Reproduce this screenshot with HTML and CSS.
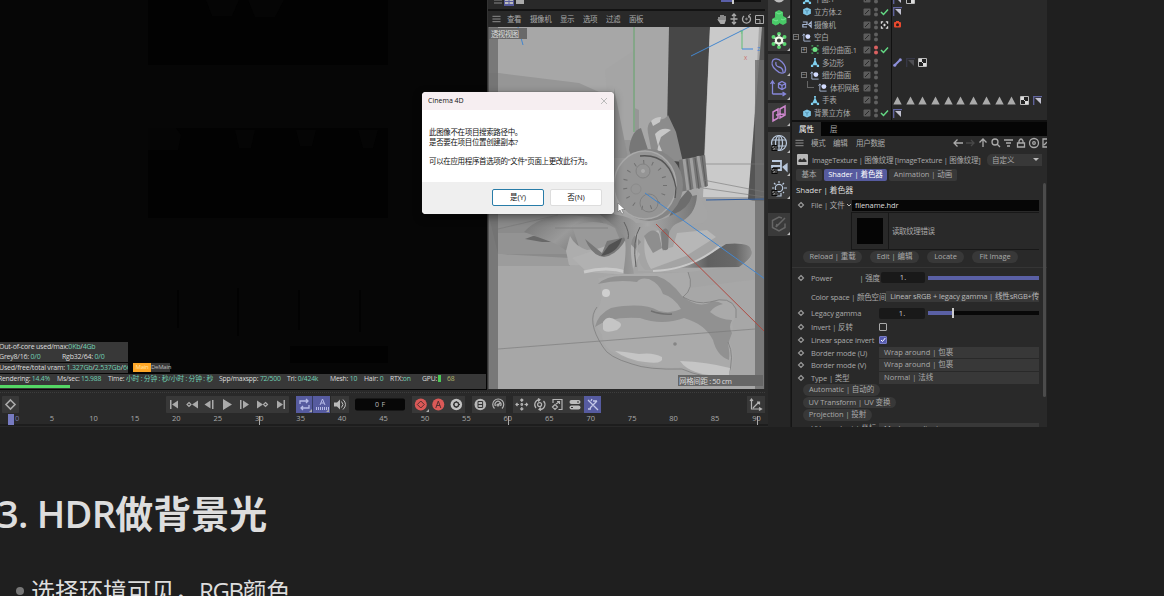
FILE: index.html
```
<!DOCTYPE html>
<html lang="zh-CN">
<head>
<meta charset="utf-8">
<title>HDR做背景光</title>
<link rel="stylesheet" href="styles.css">
</head>
<body>
<svg class="defs" width="0" height="0">
<defs>
<symbol id="layer" viewBox="0 0 8 8"><rect x=".5" y=".5" width="7" height="7" rx="1" fill="#5c5c5c"/><path d="M2 6L6 2" stroke="#292929"/></symbol>
<symbol id="dots" viewBox="0 0 6 12"><circle cx="3" cy="3.4" r="2"/><circle cx="3" cy="8.6" r="2"/></symbol>
<symbol id="check" viewBox="0 0 9 8"><path d="M1 4l2.5 2.5L8 1.5" fill="none" stroke="#63d884" stroke-width="1.5"/></symbol>
<symbol id="cube" viewBox="0 0 10 10"><path d="M5 .5l4.300 2v5L5 9.500.7 7.500v-5z" fill="#7fc6e6"/><path d="M3 3.500l2 1 2-1M5 4.500v3" stroke="#467f9d" fill="none" stroke-width=".8"/></symbol>
<symbol id="poly" viewBox="0 0 10 10"><path d="M5 1L8 8H2z" fill="#7fcfee"/><path d="M.5 7.500h2.500V10H.5zM7 7.500h2.500V10H7zM4 0h2v2H4z" fill="#7fcfee"/></symbol>
<symbol id="nul" viewBox="0 0 10 10"><path d="M1.500 1v8H9M0 3l1.500-2L3 3" stroke="#a9b9d7" fill="none"/><circle cx="6" cy="4" r="2.700" fill="#d3dcff"/></symbol>
<symbol id="cam" viewBox="0 0 12 10"><path d="M1 2h5v3H1v3h5M8 5l3-3v6z" fill="none" stroke="#a9b9d7" stroke-width="1.400"/></symbol>
<symbol id="subd" viewBox="0 0 10 10"><circle cx="5" cy="5" r="2.800" fill="#6ee183"/><path d="M1 1h2M7 1h2M1 9h2M7 9h2M1 5h1M8 5h1" stroke="#4aa560" stroke-width="1.400"/></symbol>
<symbol id="phong" viewBox="0 0 9 9"><path d="M.7 9V.7H9" fill="none" stroke="#6266a0" stroke-width="1.300"/><path d="M2 2h6v6z" fill="#c1c1d0"/></symbol>
<symbol id="checker" viewBox="0 0 9 9"><path d="M.5.5h8v8h-8z" fill="#222" stroke="#bbb"/><path d="M1 1h3v3H1zM5 5h3v3H5zM4 4h1v1H4z" fill="#ddd"/></symbol>
<symbol id="tri" viewBox="0 0 9 9"><path d="M4.500.5L8.700 8.500H.3z" fill="#aaa"/></symbol>
<symbol id="key" viewBox="0 0 8 8"><path d="M4 1.500L6.500 4 4 6.500 1.500 4z" fill="none" stroke="#999" stroke-width="1.200"/></symbol>
<symbol id="burger" viewBox="0 0 10 8"><path d="M.5 1h9M.5 4h9M.5 7h9" stroke="#999"/></symbol>
<symbol id="s1" viewBox="0 0 6 6"><path d="M0 0h6v6H0z" fill="#080808"/><path d="M3 1.500H1.300V3H3v1.500H1.200M4.500 1v4" fill="none" stroke="#aaa" stroke-width=".7"/></symbol>
</defs>
</svg>
<main class="article">
<section class="app">
  <div class="left">
    <div class="panes">
      <div class="render">
        <svg class="fill" viewBox="0 0 487 390"><path d="M0 0h487v390H0z" fill="#060606"/><path d="M148 0h240v65H148zM148 128h240v90H148z" fill="#020202"/><g fill="#050505"><path d="M206 0h33l-7 16h-20zM248 0h36l-9 17h-20zM148 128h28l5 7-3 15h-30zM235 130h20l-4 18h-12zM296 130h20l-4 16h-12zM358 130h20l-5 18h-10z"/></g><path d="M178 290v38M238 288v48M299 290v40M360 290v42" stroke="#020202" stroke-width="1.500"/><path d="M290 346h98v17h-98z" fill="#020202"/></svg>
        <div class="stats">
          <p><span>Out-of-core used/max:<b>0Kb</b>/<b>4Gb</b></span></p>
          <p><span class="grey">Grey8/16: <b>0/0</b></span><span>Rgb32/64: <b>0/0</b></span></p>
          <p class="vram"><span>Used/free/total vram: <b>1.327Gb</b>/<b>2.537Gb</b>/<b>6G</b></span></p>
        </div>
        <div class="passes"><span class="main">Main</span><span>DeMain</span></div>
        <div class="status">
          <span class="w56">Rendering: <b>14.4%</b></span><span class="w51">Ms/sec: <b>15.988</b></span><span class="w111">Time: <b>小时 : 分钟 : 秒/小时 : 分钟 : 秒</b></span><span class="w68">Spp/maxspp: <b>72/500</b></span><span class="w43">Tri: <b>0/424k</b></span><span class="w34">Mesh: <b>10</b></span><span class="w26">Hair: <b>0</b></span><span class="w32">RTX:<b>on</b></span><span class="w16">GPU:</span><i class="gpu"></i><em>68</em>
        </div>
        <div class="progress"><i></i></div>
      </div>
      <div class="view">
        <div class="viewtop"><svg width="277" height="9" viewBox="488 0 277 9"><path d="M494 0h8M494 3h8" stroke="#888"/><path d="M504 0h10v6h-10z" fill="#565a9b"/><path d="M505 0h3.500v1H505zM509.500 0h3.500v1h-3.500zM505 2h3.500v2H505zM509.500 2h3.500v2h-3.500z" fill="#bbb"/><path d="M516 0h8v4h-8z" fill="#aaa"/><path d="M721 1h12" stroke="#5a5fa8" stroke-width="2"/><path d="M734 1h27" stroke="#111" stroke-width="2"/><path d="M733 0v4" stroke="#ccc" stroke-width="2"/></svg></div>
        <div class="viewmenu"><svg width="9" height="8"><use href="#burger"/></svg><span class="m1">查看</span><span class="m2">摄像机</span><span class="m3">显示</span><span class="m4">选项</span><span class="m5">过滤</span><span>面板</span>
          <svg class="navicons" width="50" height="12" viewBox="715 13 50 12" fill="none" stroke="#aaa"><path d="M719 20v-3M721 20v-5M723 20v-5M725 20v-4" stroke-width="1.500"/><path d="M717 19l2 1h7l-1.500 4h-4z" fill="#aaa" stroke="none"/><path d="M734 15v8M730.500 19h7M732 16l2-2 2 2M732 22l2 2 2-2" stroke-width="1.300"/><path d="M744 16a4 4 0 1 0 5 0" stroke-width="1.300"/><circle cx="746.500" cy="19" r=".8"/><path d="M751 14l-2.500 1.500.5 2.500M755.500 15.500h8v8h-8zM756 19.500h4v4"/></svg>
        </div>
        <svg class="scene" viewBox="488 27 277 362">
          <defs>
            <linearGradient id="g" x1="0" x2="1"><stop stop-color="#747474"/><stop offset=".5" stop-color="#a8a8a8"/><stop offset="1" stop-color="#757575"/></linearGradient>
            <linearGradient id="leaf" x1="0" x2="1"><stop stop-color="#b0b0b0"/><stop offset=".45" stop-color="#606060"/><stop offset=".8" stop-color="#686868"/><stop offset="1" stop-color="#8e8e8e"/></linearGradient>
            <linearGradient id="cloth" x1="0" x2="1" y1="0" y2=".5"><stop stop-color="#6f6f6f"/><stop offset=".5" stop-color="#9a9a9a"/><stop offset="1" stop-color="#666"/></linearGradient>
          </defs>
          <path d="M488 27h277v362H488z" fill="#a7a7a7"/>
          <path d="M488 73h11l80 10 60 27v100H488z" fill="#969696"/>
          <path d="M605 70l30-20v90h-24z" fill="#a5a5a5"/>
          <path d="M614 88l14 70h-14z" fill="#8f8f8f"/>
          <path d="M669 27h41l-7 155h-37z" fill="#474747"/>
          <path d="M710 27h49l-9 170h-47z" fill="#cacaca"/>
          <path d="M762 27h3v180l-17-8z" fill="#555"/>
          <path d="M612 193l153 8v77l-153 20z" fill="#a4a4a4"/>
          <path d="M488 213h125l28 29-20 24-123-12z" fill="#8b8b8b"/>
          <path d="M498 233h75v21h-75z" fill="#939393"/>
          <path d="M498 254l72 4v8h-72z" fill="#9c9c9c"/>
          <path d="M525 239l8-3 15 1 22 5-28 0z" fill="#686868"/>
          <path d="M524 232q14-16 44-17l31 3 23 24-8 16-42-4-18-11z" fill="url(#cloth)"/>
          <path d="M572 226q26-9 43 2l8 19-10 11-32-5z" fill="#999"/>
          <path d="M570 236q5 10 17 14l34-4v20l-52-1-3-14z" fill="#adadad"/>
          <path d="M629 150q2-19 12-22l9 28-17 4z" fill="#777"/>
          <path d="M648 133q-2-12 8-14 8 2 12-4l8 17 7 30-30-3z" fill="#8c8c8c"/>
          <path d="M651 121q4-4 10-4l-1 5-7 4zM655 134q7-8 16-4l-10 7-3 9M659 144q-4 10 3 7" fill="#c7c7c7"/>
          <path d="M679 160l26-5 3 31-28 6z" fill="#777"/><path d="M684 159l4 31M691 158l4 31M698 156l5 31" fill="none" stroke="#a0a0a0" stroke-width="3"/><path d="M687 159l4 31M695 158l4 31M702 156l4 31" stroke="#5d5d5d"/>
          <path d="M673 197l23-9 11 23q2 8-4 12l-16 2-18-8z" fill="#a5a5a5"/>
          <path d="M688 190q11 10-2 22-6 8-18 7l6-13z" fill="#6d6d6d"/>
          <ellipse cx="649" cy="185" rx="34" ry="36" fill="#858585"/><ellipse cx="645" cy="185" rx="31" ry="34" fill="#959595" stroke="#a9a9a9" stroke-width="1.500"/>
          <ellipse cx="645" cy="185" rx="20" ry="23" fill="none" stroke="#707070" stroke-width="4" stroke-dasharray="1 8"/>
          <circle cx="643" cy="171" r="7" fill="none" stroke="#828282"/><circle cx="643" cy="171" r="2" fill="#aaa"/><circle cx="649" cy="203" r="9" fill="none" stroke="#808080"/><circle cx="636" cy="189" r="5" fill="none" stroke="#8b8b8b"/>
          <path d="M640 156q30-3 36 32l-1 10" fill="none" stroke="#555" stroke-width="1.300"/>
          <path d="M572 258q30-10 53-20l15 16-10 21-43-3z" fill="#b1b1b1"/>
          <path d="M585 239q7 17 19 18 14-2 23-20l-20 4-5 12z" fill="#777"/>
          <path d="M601 256q17-3 21-18l-13 7z" fill="#515151"/>
          <path d="M584 272q23-6 42 0" fill="none" stroke="#c9c9c9" stroke-width="3"/>
          <path d="M638 226q-5 33 7 44 52-1 72-25l24-3 10 16q-4 8-31 10l-38 5-44-2z" fill="#a8a8a8"/>
          <path d="M672 268q31-8 54-24 24-2 25 6 4 6-12 17z" fill="url(#leaf)"/>
          <path d="M645 235l14-5 6 19 8-2 4-14 30-3 9 7-30 19-35 13q-9-13-6-34z" fill="#b7b7b7"/>
          <path d="M644 236q9-10 15-2l3 14-9 5q-6-9-9-17z" fill="#8e8e8e"/>
          <path d="M653 271q37-1 67-25" fill="none" stroke="#c9c9c9" stroke-width="2"/>
          <path d="M598 213q31 1 38 10 23 0 38-9 14-5 18-18l5-1q-1 21-19 28-11 4-11 25-6 6-5-3-2-17-7-18-15-4-23 13-3 9 2 34-13 7-10-6 4-30-2-34-9-10-24-21z" fill="url(#g)"/>
          <path d="M624 222q6 11 4 17M640 227q-8 13-4 40" fill="none" stroke="#606060"/>
          <path d="M661 232q5-7 8 0l-1 17q-4 3-6-1z" fill="#7c7c7c"/>
          <path d="M600 278q16-5 28-4l22-1q20 1 38-1 7 16-5 25 14 8 27 5 22-6 26 7 0 10-4 14 3 8-4 16 7 12 5 23-1 9-5 13-25 3-42-8-33 4-62-10-22-6-22-23-14-14-4-26 7-10 0-30z" fill="#aaa"/>
          <path d="M598 284q8-8 24-8h35q13 4 25 20 15 12 27 7 5-4 14 1-9 2-13 8 10 8 22 8-4 8 0 13l-4 11q2 9 1 16-12-4-16-20-8-16-29-22-22 8-44 0-30-2-45 9 3-13 16-19 32-6 48 3 12 3 22-2-7-12-18-15-3-10-14-15-9-2-12 3-19-3-39 2z" fill="#919191"/>
          <path d="M688 272q7 16-5 25 14 8 27 5 20-7 26 7v9M597 307q-11 14 6 40 5 10 29 17 16 6 50 5 22 10 46 8 7-21 0-35" fill="none" stroke="#7d7d7d" stroke-width=".8"/>
          <path d="M651 311q12 4 21 3" stroke="#707070" fill="none" stroke-width="1.500"/><circle cx="675" cy="344" r="1.800" fill="#858585"/>
          <circle cx="606" cy="293" r="4" fill="#cfcfcf"/><path d="M603 322q5-8 14-1 8 3 0 9-12 4-14-1zM615 351q12 1 24 3 14-2 23 3 2 8-17 5-18-2-30-11zM680 361q27 1 50 7l-1 8q-38 1-49-15z" fill="#c5c5c5"/>
          <path d="M488 27h10v362h-10zM755 60h10v329h-10z" fill="#6d6d6d" opacity=".8"/>
          <path d="M498 349l257-20M703 180l62 12M703 164h62M703 188l62 9M498 229l60-14M555 228h53" fill="none" stroke="#777" stroke-width=".6"/>
          <path d="M634 27v105" stroke="#62a56b"/><path d="M518 27l5 18M691 56l60-30M645 193l120 86" stroke="#4386ce" fill="none"/><path d="M706 200l59-1" stroke="#315d9e"/><path d="M656 224l109 108" stroke="#ae4941"/>
          <path d="M742 31v18" stroke="#5fbe74"/><path d="M742 49h11" stroke="#3d86de"/><text x="744" y="60" class="axis x">X</text><text x="757" y="51" class="axis z">Z</text><text x="740" y="34" class="axis y">Y</text>
          <path d="M489 28h38v11h-38z" fill="#696969"/><text x="491" y="36.500" class="vp" textLength="28">透视视图</text>
          <path d="M678 375h85v11h-85z" fill="#666"/><text x="679" y="384" class="vp" textLength="53">网格间距 : 50 cm</text>
          <path d="M488 27v362M764.500 27v362" stroke="#333"/>
        </svg>
      </div>
    </div>
    <div class="timeline">
      <svg class="transport" viewBox="0 392 768 22" width="768" height="22">
        <path d="M0 392h766" stroke="#3d3d3d" stroke-width="2" stroke-dasharray="1 1"/>
        <g fill="#383838"><rect x="2" y="396" width="17" height="17" rx="1"/><rect x="166" y="396" width="123" height="17" rx="1"/><rect x="331" y="396" width="18" height="17"/><rect x="412" y="396" width="53" height="17"/><rect x="472" y="396" width="34" height="17"/><rect x="513" y="396" width="71" height="17"/><rect x="747" y="396" width="18" height="17"/></g>
        <path d="M296 396h34v17h-34zM584 396h17v17h-17z" fill="#565b9f"/><path d="M312.500 396v17" stroke="#343b61"/>
        <path d="M10.500 400l4.500 4.500-4.500 4.500-4.500-4.500z" stroke="#aaa" stroke-width="1.600" fill="none"/>
        <g fill="#aaa"><path d="M170 400h1.500v9H170zM178 400.500v8l-6-4zM198 400.500v8l-6-4zM210.500 400.500v8l-6-4zM212 400h1.500v9H212zM223 399l9 5.500-9 5.500zM240 400h1.500v9H240zM243 400.500l6 4-6 4zM257 400.500l6 4-6 4zM277 400.500l6 4-6 4zM283.500 400h1.500v9h-1.500z"/></g>
        <path d="M189 402.500l2 2-2 2-2-2zM265.500 402.500l2 2-2 2-2-2z" stroke="#aaa" fill="none" stroke-width="1.200"/>
        <g fill="none" stroke="#b7bce8" stroke-width="1.300"><path d="M300 404v-3h8M306 399l2 2-2 2M309 405v3h-8M303 406l-2 2 2 2"/><path d="M320 405l2.500-6 2.500 6M321 403h3" stroke-width="1"/><path d="M316 408.500h13" stroke-width="3" stroke-dasharray="1 1"/></g>
        <path d="M334 402.500h3l3-3v10l-3-3h-3z" fill="#bbb"/><path d="M341.500 401.500q3 3 0 6M343 399.500q5 5 0 10" fill="none" stroke="#bbb"/>
        <rect x="355" y="398.500" width="50" height="12" rx="2" fill="#070707"/><text x="375" y="407" class="frame" textLength="10">0 F</text>
        <circle cx="420.800" cy="404.500" r="6" fill="#db5957"/><path d="M420.800 401l3.500 3.500-3.500 3.500-3.500-3.500z" stroke="#542f2f" fill="none"/><circle cx="438.300" cy="404.500" r="6" fill="#db5957"/><path d="M435.800 408l2.500-7 2.500 7M436.500 405.500h3.600" stroke="#542f2f" fill="none"/>
        <circle cx="456.300" cy="404.500" r="5.800" fill="#c2c2c2"/><circle cx="456.300" cy="404.500" r="2.400" stroke="#333" stroke-width="1.400" fill="none"/><path d="M456.300 401v1M456.300 407v1M453 404.500h1M459 404.500h1" stroke="#333"/>
        <circle cx="480.300" cy="404.500" r="5.800" fill="#b7b7b7"/><path d="M478 401.500h4.600v6H478zM478 404.500h4.600" stroke="#333" fill="none"/>
        <g fill="none" stroke="#b5b5b5" stroke-width="1.200"><path d="M494.500 408.500a5.500 5.500 0 1 1 7.500 0M495.500 406a3 3 0 1 1 5 0M498 405l2-2"/><circle cx="498" cy="405" r="1"/><path d="M521.800 399v3M521.800 407v3M516 404.500h3M524.500 404.500h3M520.300 400.500l1.500-1.500 1.500 1.500M520.300 408.500l1.500 1.500 1.500-1.500M517.500 403l-1.500 1.500 1.500 1.500M526 403l1.500 1.500L526 406"/><circle cx="521.800" cy="404.500" r=".8"/><path d="M536 408a5 5 0 0 1 3.500-8.300M543.500 401a5 5 0 0 1-3.500 8.500M538 398.500l2 1.200-1.700 2M541 410.500l-2-1 1.700-2"/><circle cx="539.600" cy="404.600" r="2"/><path d="M553 403v-3.500h9v10h-3.500M552.500 407l2.500-2.500 2.500 2.500-2.500 2.500zM556 404l3-2M557 401.500h2.500v2.500"/></g>
        <rect x="569.500" y="400" width="11" height="4" rx="2" fill="#bcbcbc"/><rect x="569.500" y="405.500" width="11" height="4" rx="2" fill="#bcbcbc"/><path d="M577 402h2M571 407.500h2" stroke="#333"/>
        <path d="M588 400l10 10M593 401h4M590 408l3-3 4-4M588 409h3M592 399l-1 2" stroke="#c4c7e8" fill="none" stroke-width="1.300"/>
        <path d="M751.500 399v10h10M753 408l6-6M750 401l1.500-2 1.500 2M759 407.500l2.500 1.500-2.500 1.500M757 402h2.500v2.500" stroke="#b5b5b5" fill="none" stroke-width="1.200"/>
        <path d="M429 409v3h-3zM312 409v3h-3zM329 409v3h-3z" fill="#aaa"/>
      </svg>
      <div class="ruler"><span class="zero"><i></i>0</span><span>5</span><span>10</span><span>15</span><span>20</span><span>25</span><span class="tick">30</span><span>35</span><span>40</span><span>45</span><span>50</span><span>55</span><span class="tick">60</span><span>65</span><span>70</span><span>75</span><span>80</span><span>85</span><span class="tick last">90</span></div>
    </div>
  </div>
  <div class="tools">
    <svg width="24" height="427" viewBox="768 0 24 427" fill="none">
      <path d="M768 0h24v427h-24z" fill="#252525"/><path d="M768 0h22v51h-22zM768 54h22v46h-22zM768 103h22v24h-22zM768 132h22v67h-22zM768 213h22v23h-22z" fill="#3a3a3a"/>
      <path d="M774 0q5 5 10 0z" fill="#bbb"/>
      <g fill="#49c968"><path d="M779 10l4 2v5l-4 2-4-2v-5zM775.500 17l3.500 2v5l-3.500 1.500-3.500-2v-4.500zM783 16l3.500 2v5l-3.500 2-4-2v-4z"/></g><path d="M776 12.500l3 1.500 3-1.500M773 19.500l3 1.500 2-1M781 19l2 1 3-1.500" stroke="#83e59a" stroke-width=".8"/>
      <g fill="#59d76f"><circle cx="779" cy="34" r="2"/><circle cx="773.500" cy="37" r="2"/><circle cx="784.500" cy="37" r="2"/><circle cx="773.500" cy="44" r="2"/><circle cx="784.500" cy="44" r="2"/><circle cx="779" cy="47" r="2"/></g><circle cx="779" cy="40.500" r="3.200" stroke="#f0ffe9" stroke-width="2.200"/><path d="M779 36v-1.500M779 46v-1.500M774.500 38l1.500.5M783.500 38l-1.500.5M774.500 43l1.500-.5M783.500 43l-1.500-.5" stroke="#eee" stroke-width="1.500"/>
      <g stroke="#8686d8" stroke-width="1.300"><path d="M773 60q4-3 9 2 5 5 3 10-4 3-9-2-6-5-3-10zM776 62q-1 4 3 5t4 5"/><path d="M772.500 94V82M772.500 94h12M770.500 84l2-3 2 3M782.500 92l3 2-3 2M782 81.500l3.500 2v4l-3.500 2-3.500-2v-4zM778.500 83.500l3.500 2 3.500-2M782 85.500v4"/></g>
      <path d="M773 112l5-3v9l-5 3zM780 109l5-3v9l-5 3zM776 115l8-1" stroke="#cf87cf" stroke-width="1.500"/>
      <g stroke="#bac9dd" stroke-width="1.200"><circle cx="779" cy="143" r="7.500"/><ellipse cx="779" cy="143" rx="3.500" ry="7.500"/><path d="M772 140h14M772 146h14M779 136v14"/><path d="M772 161h9v5h-9v4M781 166v4h-6" stroke-width="1.800"/><path d="M783 167l4-3v7z" fill="#bac9dd"/><circle cx="779" cy="188" r="3.700"/><path d="M777 193v3h4v-3M779 181v2M772 188h2M784 188h3M774 183l1.500 1.500M784 183l-1.500 1.500M774 193l1-1M784 193l-1-1"/></g>
      <use href="#s1" x="771" y="145" width="7" height="6"/><use href="#s1" x="771" y="168" width="7" height="6"/><use href="#s1" x="771" y="190" width="7" height="6"/>
      <path d="M782 218l-3-1-6.500 3.500v7l6.500 3.500 6-3.500v-4M776 227l9-9M776 227l1-3" stroke="#666" stroke-width="1.500"/>
      <path d="M790 15v3h-3zM790 48v3h-3zM790 73v3h-3zM790 97v3h-3zM790 123v3h-3zM790 150v3h-3zM790 173v3h-3zM790 196v3h-3zM790 232v3h-3z" fill="#bbb"/>
      <path d="M791.500 0v427" stroke="#151515" stroke-width="2"/>
    </svg>
  </div>
  <div class="side">
    <div class="objects">
      <div class="row"><span class="name d1"><svg class="ic"><use href="#poly"/></svg>平面.1</span><svg class="ly"><use href="#layer"/></svg><svg class="dt"><use href="#dots"/></svg><span class="ck"></span><span class="tags"><svg><use href="#phong"/></svg><svg><use href="#checker"/></svg></span></div>
      <div class="row"><span class="name d1"><svg class="ic"><use href="#cube"/></svg>立方体.2</span><svg class="ly"><use href="#layer"/></svg><svg class="dt"><use href="#dots"/></svg><svg class="ck"><use href="#check"/></svg><span class="tags"><svg><use href="#phong"/></svg></span></div>
      <div class="row"><span class="name d1"><svg class="ic"><use href="#cam"/></svg>摄像机</span><svg class="ly"><use href="#layer"/></svg><svg class="dt"><use href="#dots"/></svg><svg class="ck" viewBox="0 0 9 9"><path d="M1 3V1h2M6 1h2v2M8 6v2H6M3 8H1V6M3 4.500h3M4.500 3v3" fill="none" stroke="#ddd" stroke-width="1.300"/></svg><span class="tags"><svg viewBox="0 0 9 9"><rect x="1" y="2" width="7" height="5.500" rx="1" fill="#e7492e"/><path d="M3 1h3v2H3z" fill="#e7492e"/><circle cx="4.500" cy="4.800" r="1.500" fill="#2b1917"/></svg></span></div>
      <div class="row"><span class="name d0"><i class="fold">−</i><svg class="ic"><use href="#nul"/></svg>空白</span><svg class="ly"><use href="#layer"/></svg><svg class="dt"><use href="#dots"/></svg><span class="ck"></span></div>
      <div class="row"><span class="name d2"><i class="fold">+</i><svg class="ic"><use href="#subd"/></svg>细分曲面.1</span><svg class="ly"><use href="#layer"/></svg><svg class="dt red"><use href="#dots"/></svg><svg class="ck"><use href="#check"/></svg></div>
      <div class="row"><span class="name d3"><svg class="ic"><use href="#poly"/></svg>多边形</span><svg class="ly"><use href="#layer"/></svg><svg class="dt"><use href="#dots"/></svg><span class="ck"></span><span class="tags"><svg viewBox="0 0 9 9"><path d="M1.500 7.500l6-6" stroke="#8d90db" stroke-width="2"/><circle cx="1.700" cy="7.300" r="1.500" fill="#8d90db"/><circle cx="7.300" cy="1.700" r="1.500" fill="#8d90db"/></svg><svg class="dim"><use href="#phong"/></svg><svg><use href="#checker"/></svg></span></div>
      <div class="row"><span class="name d2"><i class="fold">−</i><svg class="ic"><use href="#nul"/></svg>细分曲面</span><svg class="ly"><use href="#layer"/></svg><svg class="dt"><use href="#dots"/></svg><span class="ck"></span></div>
      <div class="row"><span class="name d4"><i class="elbow"></i><svg class="ic"><use href="#nul"/></svg>体积网格</span><svg class="ly"><use href="#layer"/></svg><svg class="dt"><use href="#dots"/></svg><span class="ck"></span></div>
      <div class="row"><span class="name d3"><svg class="ic"><use href="#poly"/></svg>手表</span><svg class="ly"><use href="#layer"/></svg><svg class="dt"><use href="#dots"/></svg><span class="ck"></span><span class="tags"><svg><use href="#tri"/></svg><svg><use href="#tri"/></svg><svg><use href="#tri"/></svg><svg><use href="#tri"/></svg><svg><use href="#tri"/></svg><svg><use href="#tri"/></svg><svg><use href="#tri"/></svg><svg><use href="#tri"/></svg><svg><use href="#tri"/></svg><svg><use href="#tri"/></svg><svg><use href="#checker"/></svg><svg><use href="#phong"/></svg></span></div>
      <div class="row"><span class="name d1"><svg class="ic"><use href="#cube"/></svg>背景立方体</span><svg class="ly"><use href="#layer"/></svg><svg class="dt"><use href="#dots"/></svg><svg class="ck"><use href="#check"/></svg><span class="tags"><svg><use href="#phong"/></svg></span></div>
    </div>
    <div class="attrs">
      <div class="tabs"><span class="on">属性</span><span>层</span></div>
      <div class="menu"><svg width="9" height="8"><use href="#burger"/></svg><span class="a1">模式</span><span class="a2">编辑</span><span>用户数据</span>
        <svg class="menuicons" width="94" height="12" viewBox="953 137 94 12" fill="none" stroke="#aaa" stroke-width="1.300"><path d="M954 143h9M957.500 139.500L954 143l3.500 3.500"/><path d="M966 143h8M971 140l3 3-3 3" stroke="#484848"/><path d="M983 147v-8M979.500 142.500l3.500-3.500 3.500 3.500"/><circle cx="995" cy="142" r="3"/><path d="M997 144l3 3M1004 140h9M1006 143h5M1007 146h3M1017.500 143h7v4h-7zM1019 143v-2q2-4 4 0v2"/><circle cx="1034" cy="143" r="4.500"/><circle cx="1034" cy="143" r="1.300"/><path d="M1047 139h-4v8h4M1044 145l3-3"/></svg>
      </div>
      <div class="title"><svg width="11" height="11"><rect width="11" height="11" rx="1" fill="#b7b7b7"/><path d="M1.500 8V6l2-1.500L5 6l2-2 2.500 2.500V8z" fill="#303030"/></svg><span class="obj">ImageTexture | 图像纹理 [ImageTexture | 图像纹理]</span><span class="custom">自定义<i></i></span></div>
      <div class="sections"><span class="s1">基本</span><span class="s2">Shader | 着色器</span><span class="s3">Animation | 动画</span></div>
      <h3>Shader | 着色器</h3>
      <div class="prop file"><svg class="key"><use href="#key"/></svg><label>File | 文件 <svg width="6" height="5"><path d="M1 1l2 2 2-2" stroke="#bbb" fill="none"/></svg></label><span class="input">filename.hdr</span></div>
      <div class="preview"><div><i></i></div><span>读取纹理错误</span></div>
      <div class="actions"><span class="b1">Reload | 重载</span><span class="b2">Edit | 编辑</span><span class="b3">Locate</span><span class="b4">Fit Image</span></div>
      <div class="prop power"><svg class="key"><use href="#key"/></svg><label>Power <em>| 强度</em></label><span class="num">1.</span><span class="slider full"></span></div>
      <div class="prop color"><svg class="key"></svg><label>Color space | 颜色空间</label><span class="combo wide">Linear sRGB + legacy gamma | 线性sRGB+传</span></div>
      <div class="prop gamma"><svg class="key"><use href="#key"/></svg><label>Legacy gamma</label><span class="num">1.</span><span class="slider"></span></div>
      <div class="prop"><svg class="key"><use href="#key"/></svg><label>Invert | 反转</label><span class="box"></span></div>
      <div class="prop"><svg class="key"><use href="#key"/></svg><label>Linear space invert</label><span class="box checked"><svg width="6" height="6"><path d="M1 3l1.500 1.500L5.300 1" stroke="#fff" fill="none"/></svg></span></div>
      <div class="prop"><svg class="key"><use href="#key"/></svg><label>Border mode (U)</label><span class="combo">Wrap around | 包裹</span></div>
      <div class="prop"><svg class="key"><use href="#key"/></svg><label>Border mode (V)</label><span class="combo">Wrap around | 包裹</span></div>
      <div class="prop"><svg class="key"><use href="#key"/></svg><label>Type | 类型</label><span class="combo">Normal | 法线</span></div>
      <div class="pill"><span class="p1">Automatic | 自动的</span></div>
      <div class="pill"><span class="p2">UV Transform | UV 变换</span></div>
      <div class="pill"><span class="p3">Projection | 投射</span></div>
      <div class="prop"><svg class="key"></svg><label>UV coord set | 坐标</label><span class="combo">Mesh coordinates</span></div>
    </div>
    <i class="scroll"></i>
  </div>
  <div class="dialog">
    <header><span>Cinema 4D</span><svg width="8" height="8"><path d="M1 1l6 6M7 1L1 7" stroke="#bbb"/></svg></header>
    <div class="message"><p class="l1">此图像不在项目搜索路径中。</p><p class="l2">是否要在项目位置创建副本?</p><p class="l3">可以在应用程序首选项的"文件"页面上更改此行为。</p></div>
    <footer><span class="yes">是(Y)</span><span>否(N)</span></footer>
  </div>
  <svg class="cursor" width="9" height="13" viewBox="0 0 9 13"><path d="M1 1v9l2-2 2 4 1.500-.8L4.700 7.500H8z" fill="#fff" stroke="#666" stroke-width=".6"/></svg>
</section>
<h2><span class="latin">3. HDR</span>做背景光</h2>
<ul><li><span>选择环境可见，<span class="rgb">RGB</span>颜色</span></li></ul>
</main>
</body>
</html>
```
FILE: styles.css
```
*{box-sizing:border-box}
html,body{margin:0;width:1164px;height:596px;overflow:hidden;background:#1f1f1f}
body{font-family:"Open Sans","Noto Sans CJK SC",sans-serif;color:#ddd}
p,h2,h3,ul{margin:0}
i,em{font-style:normal}
svg{display:block;flex:none}
span,label,p{white-space:nowrap}
.defs{position:absolute}
.article{height:596px;overflow:hidden}
.app{position:relative;display:flex;width:1047px;height:427px;overflow:hidden;background:#292929;font-size:7.5px;line-height:10px;color:#aaa}
.left{width:768px}
.panes{display:flex;height:390px}
.render{position:relative;width:488px;background:#060606;border-right:1px solid #333}
.fill{width:487px;height:390px}
.render b{font-weight:400;color:#70d0b5}
.stats{position:absolute;left:0;top:342px;width:128px;font-size:7px;color:#ddd}
.stats p{display:flex;height:10px;line-height:9px;margin-bottom:.3px;background:#383838;overflow:hidden}
.stats span{margin-left:-1px;letter-spacing:-.21px}
.stats .grey{width:64px}
.stats .vram span{letter-spacing:-.2px}
.passes{position:absolute;left:133px;top:363px;display:flex;font-size:6px;line-height:9px;color:#bbb}
.passes span{width:19px;height:9px;background:#383838;letter-spacing:-.25px}
.passes .main{width:18px;background:#ffa726;color:#ffe1a4;text-align:center}
.status{position:absolute;left:0;top:374px;display:flex;width:486px;height:11px;padding-left:2px;background:#383838;color:#ddd;font-size:6.8px;line-height:9px;letter-spacing:-.2px}
.status span:first-child{margin-left:-4px;width:59px}
.w51{width:51px}.w111{width:111px}.w68{width:68px}.w43{width:43px}.w34{width:34px}.w26{width:26px}.w32{width:32px}.w16{width:16px}
.gpu{width:3px;height:7px;margin:1px 6px 0 0;background:#4bc957}
.status em{color:#b0b66c}
.progress{position:absolute;left:0;top:384px;width:486px;height:5px;background:#383838;padding-top:1px}
.progress i{display:block;width:70px;height:3px;background:#54d765}
.view{width:277px;background:#292929}
.viewtop{height:11px;border-bottom:2px solid #131313}
.viewmenu{height:16px;display:flex;align-items:center;padding-left:4px;letter-spacing:-.4px}
.viewmenu span{margin-left:6px}
.viewmenu .m1{width:17px}.viewmenu .m2{width:24px}.viewmenu .m3,.viewmenu .m4,.viewmenu .m5{width:17px}
.navicons{margin-left:auto}
.scene{width:277px;height:362px}
.axis{font:5.5px "Open Sans",sans-serif}.x{fill:#ca6862}.y{fill:#5fbe74}.z{fill:#3d86de}
.vp{font:7.5px "Open Sans","Noto Sans CJK SC",sans-serif;fill:#ddd}
.frame{font:7px "Open Sans",sans-serif;fill:#bbb}
.timeline{height:36px;padding-top:2px;border-bottom:2px solid #1d1d1d}
.ruler{display:flex;height:12px;font-size:7.5px;line-height:9px}
.ruler span{position:relative;flex:none;width:41.45px;text-align:center}
.ruler .zero{display:flex;width:31.3px;padding-left:8px;color:#7777b0}
.zero i{width:6px;height:11px;background:#777bc1;margin-right:1px}
.ruler .last{width:32px;padding-left:9px;text-align:left}
.ruler .last{width:31px;padding-left:16.5px}
.tick:after{content:"";position:absolute;left:21px;top:2px;width:1px;height:9px;background:#aaa}
.tools{width:24px}
.side{position:relative;width:255px;background:#292929}
.objects{height:120px;overflow:hidden;background:linear-gradient(90deg,transparent 99px,#111 99px,#111 100px,transparent 100px)}
.row{display:flex;align-items:center;height:12.65px}
.row:first-child{margin-top:-7px}
.name{display:flex;align-items:center;width:70px;height:12px;letter-spacing:-.25px}
.ic{width:10px;height:9px;margin-right:2px}
.d0{padding-left:1px}.d1{padding-left:10px}.d2{padding-left:9px}.d3{padding-left:18px}.d4{padding-left:15px}
.fold{display:flex;align-items:center;justify-content:center;width:6px;height:6px;margin-right:3px;border:1px solid #777;color:#aaa;font-size:7px;flex:none}
.elbow{width:7px;height:7px;margin:-6px 4px 0 0;border:solid #666;border-width:0 0 1px 1px;flex:none}
.ly{width:8px;height:8px;margin-left:1px}
.dt{width:6px;height:12px;margin-left:2px;fill:#606060}.dt.red{fill:#db6161}
.ck{width:9px;height:8px;margin-left:1px}
.tags{display:flex;gap:3.7px;margin-left:4px}
.tags svg{width:9px;height:9px}.dim{opacity:.25}
.attrs{height:307px;overflow:hidden;border-top:2px solid #111}
.tabs{height:14px;display:flex;background:#050505;line-height:14px}
.tabs span{padding-left:8px}.tabs .on{width:29px;padding-left:7px;background:#292929;color:#fff;margin-right:1px}
.menu{display:flex;align-items:center;height:14px;padding-left:3px;letter-spacing:-.3px}
.menu .a1{margin-left:7px;width:22px}.menu .a2{width:23px}
.menuicons{margin-left:auto}
.title{display:flex;height:19px;align-items:center;padding-left:5px}
.obj{width:179px;padding-left:4px;letter-spacing:-.27px}
.custom{display:flex;align-items:center;justify-content:space-between;width:55px;height:12px;padding:0 3px 0 5px;background:#383838;border-radius:5px 0 0 5px}
.custom i{border:3px solid transparent;border-top-color:#bbb;border-bottom:0}
.sections{display:flex;gap:2px;padding-left:4px;height:14px}
.sections span{height:12px;background:#383838;text-align:center;border-radius:2px;line-height:11px;letter-spacing:-.05px}
.sections .s1{width:26px}.sections .s2{width:63px;background:#565b9f;color:#fff}.sections .s3{width:68px}
.attrs h3{height:15px;padding-left:4px;font-size:8px;font-weight:400;line-height:14px;letter-spacing:-.15px;color:#ddd}
.prop{display:flex;align-items:center;width:247px;height:12.65px}
.key{width:8px;height:8px;margin:0 6px 0 5px}
.prop label{display:flex;align-items:center;width:68px;letter-spacing:-.15px}
.file{height:14px}.file label{width:41px;gap:1px}
.input{flex:1;height:11px;padding-left:3px;background:#060606;color:#ddd;line-height:10px;letter-spacing:-.1px}
.preview{display:flex;height:38px;margin-left:59px;width:188px;align-items:center;border-top:1px solid #181818;border-bottom:1px solid #181818}
.preview div{width:38px;height:37px;padding:5px;border:1px solid #181818;border-top:0}
.preview div i{display:block;width:26px;height:26px;background:#050505}
.preview>span{margin-left:3px;letter-spacing:-.4px}
.actions{display:flex;gap:8px;height:18px;padding:1px 0 0 11px;border-bottom:1px solid #353535}
.actions span,.pill span{display:block;height:11.5px;background:#383838;border-radius:6px;text-align:center;line-height:11px;letter-spacing:-.08px}
.b1{width:59px}.b2{width:49px}.b3{width:37px}.b4{width:46px}
.power{height:19px}.color{height:19px}.gamma{height:14px;margin-bottom:1px}
.power em{margin-left:27px}
.num{width:46px;height:11px;text-align:center;background:#191919;border-radius:2px;color:#ccc;line-height:11px}
.power .num{margin-left:2px;width:44px}
.slider{flex:1;height:10px;margin-left:3px;background:linear-gradient(#ccc,#ccc) 24px 0/2px 10px no-repeat,linear-gradient(#5a60a5,#5a60a5) 0 3px/24px 4px no-repeat,linear-gradient(#080808,#080808) 0 3px/100% 4px no-repeat}
.slider.full{height:4px;background:#5a60a5}
.combo{flex:1;height:11.7px;padding-left:5px;background:#383838;line-height:11px}
.prop.color label{width:77px;letter-spacing:-.2px}
.combo.wide{padding-left:4px;color:#bbb;letter-spacing:-.13px}
.box{width:8px;height:8px;border:1px solid #aaa;border-radius:1px}
.checked{background:#565bb0;border-color:#777bc1}
.pill{height:12.65px;padding-left:11px}
.p1{width:77px}.p2{width:93px}.p3{width:69px}
.scroll{position:absolute;left:251px;top:183px;width:3px;height:214px;border-radius:2px;background:#4b4b4b}
.dialog{position:absolute;left:422px;top:92px;width:192px;height:122px;border-radius:4px;overflow:hidden;background:#fff;color:#111;box-shadow:0 3px 10px #0007,0 0 1px #333}
.dialog header{height:18px;display:flex;align-items:center;justify-content:space-between;padding:0 6px;background:#f6eef1;font-size:7px}
.message{height:72px;padding:17px 7px 0}
.message p{height:10px;letter-spacing:-.35px}
.message .l2{height:19px}
.dialog footer{display:flex;gap:6px;height:32px;padding:7px 12px 0 70px;background:#efefef}
.dialog footer span{width:53px;height:17px;border:1px solid #ddd;border-radius:2px;background:#fff;text-align:center;line-height:15px}
.dialog footer .yes{border-color:#287ca8}
.cursor{position:absolute;left:617px;top:202px}
h2{height:54px;margin-top:58px;margin-left:-3px;font-size:38px;font-weight:600;line-height:56px;color:#ddd}
.latin{letter-spacing:-.75px}
ul{list-style:none;padding:0 0 0 16px;margin-top:34px}
li{display:flex;align-items:center;gap:7px;font-size:24px;line-height:36px;color:#ddd}
li:before{content:"";width:8px;height:8px;border-radius:50%;background:#777}
.rgb{letter-spacing:-1.4px}
```
